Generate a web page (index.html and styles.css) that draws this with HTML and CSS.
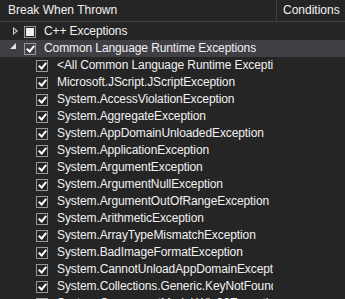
FILE: index.html
```html
<!DOCTYPE html>
<html lang="en">
<head>
  <meta charset="UTF-8" />
  <title>Exception Settings</title>
  <link rel="stylesheet" href="styles.css">
</head>
<body>
  <div class="grid">
    <!-- Column headers -->
    <div class="header">
      <div class="col-name">Break When Thrown</div>
      <div class="col-cond">Conditions</div>
    </div>

    <!-- Tree -->
    <div class="tree">
      <div class="row">
        <span class="expander collapsed"></span>
        <span class="check partial"></span>
        <span class="label">C++ Exceptions</span>
      </div>
      <div class="row selected">
        <span class="expander expanded"></span>
        <span class="check on"></span>
        <span class="label">Common Language Runtime Exceptions</span>
      </div>
      <div class="row child"><span class="check on"></span><span class="label">&lt;All Common Language Runtime Exceptions not in this list&gt;</span></div>
      <div class="row child"><span class="check on"></span><span class="label">Microsoft.JScript.JScriptException</span></div>
      <div class="row child"><span class="check on"></span><span class="label">System.AccessViolationException</span></div>
      <div class="row child"><span class="check on"></span><span class="label">System.AggregateException</span></div>
      <div class="row child"><span class="check on"></span><span class="label">System.AppDomainUnloadedException</span></div>
      <div class="row child"><span class="check on"></span><span class="label">System.ApplicationException</span></div>
      <div class="row child"><span class="check on"></span><span class="label">System.ArgumentException</span></div>
      <div class="row child"><span class="check on"></span><span class="label">System.ArgumentNullException</span></div>
      <div class="row child"><span class="check on"></span><span class="label">System.ArgumentOutOfRangeException</span></div>
      <div class="row child"><span class="check on"></span><span class="label">System.ArithmeticException</span></div>
      <div class="row child"><span class="check on"></span><span class="label">System.ArrayTypeMismatchException</span></div>
      <div class="row child"><span class="check on"></span><span class="label">System.BadImageFormatException</span></div>
      <div class="row child"><span class="check on"></span><span class="label">System.CannotUnloadAppDomainException</span></div>
      <div class="row child"><span class="check on"></span><span class="label">System.Collections.Generic.KeyNotFoundException</span></div>
      <div class="row child"><span class="check on"></span><span class="label">System.ComponentModel.Win32Exception</span></div>
    </div>
  </div>
</body>
</html>
```

FILE: styles.css
```css
body {
  margin: 0;
  background: #252526;
  font-family: "Liberation Sans", Arial, sans-serif;
  font-size: 12px;
  color: #f1f1f1;
  overflow: hidden;
}

.grid {
  width: 345px;
  height: 299px;
  overflow: hidden;
}

.header {
  display: flex;
  height: 21px;
  border-bottom: 1px solid #3f3f46;
}

.col-name {
  width: 268px;
  padding-left: 8px;
  line-height: 21px;
  border-right: 1px solid #3f3f46;
}

.col-cond {
  padding-left: 6px;
  line-height: 21px;
}

.tree {
  padding-top: 1px;
  width: 273px;
}

.row {
  display: flex;
  align-items: center;
  height: 17px;
  padding-left: 10px;
  white-space: nowrap;
  overflow: hidden;
  letter-spacing: -0.1px;
}

.row.selected {
  background: #3f3f46;
  width: 335px;
}

.row.child {
  padding-left: 36px;
}

.expander {
  width: 14px;
  height: 17px;
  position: relative;
  flex: none;
}

/* hollow right-pointing arrow */
.expander.collapsed::before {
  content: "";
  position: absolute;
  left: 3px;
  top: 4px;
  border-left: 5px solid #d0d0d0;
  border-top: 4px solid transparent;
  border-bottom: 4px solid transparent;
}

.expander.collapsed::after {
  content: "";
  position: absolute;
  left: 4px;
  top: 6px;
  border-left: 2px solid #252526;
  border-top: 2px solid transparent;
  border-bottom: 2px solid transparent;
}

/* filled down-right arrow */
.expander.expanded::before {
  content: "";
  position: absolute;
  left: 0;
  top: 3px;
  border-right: 6px solid #e0e0e0;
  border-top: 6px solid transparent;
}

.check {
  width: 10px;
  height: 10px;
  border: 1px solid #999999;
  flex: none;
  position: relative;
  margin-right: 8px;
}

.check.partial::before {
  content: "";
  position: absolute;
  left: 1px;
  top: 1px;
  width: 8px;
  height: 8px;
  background: #f0f0f0;
}

.check.on::before {
  content: "";
  position: absolute;
  left: 3px;
  top: 0px;
  width: 3px;
  height: 6px;
  border-right: 2px solid #ffffff;
  border-bottom: 2px solid #ffffff;
  transform: rotate(40deg);
}

.row.child .check {
  margin-right: 9px;
}

.label {
  line-height: 17px;
}
```
